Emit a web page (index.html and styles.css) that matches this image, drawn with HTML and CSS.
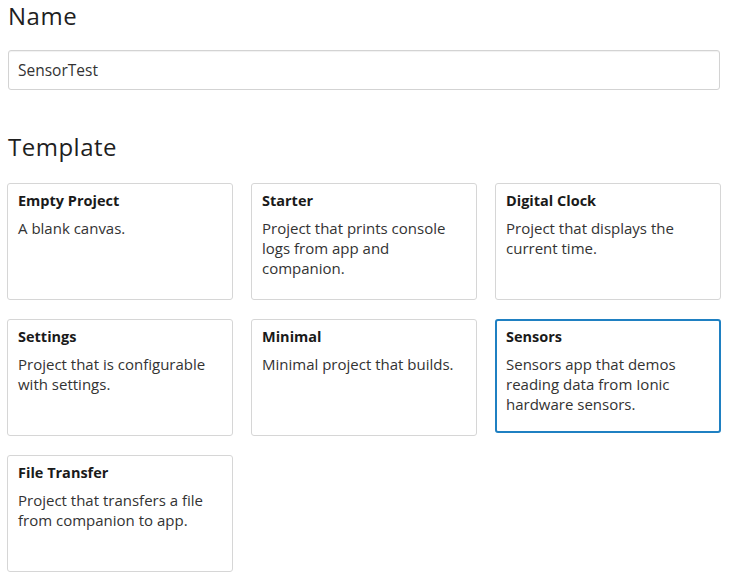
FILE: index.html
```html
<!DOCTYPE html>
<html>
<head>
<meta charset="utf-8">
<link rel="stylesheet" href="styles.css">
</head>
<body>
<div class="page">
  <h2 class="heading">Name</h2>
  <input class="name-input" type="text" value="SensorTest">
  <h2 class="heading heading-template">Template</h2>
  <div class="grid">
    <div class="card"><div class="card-title">Empty Project</div><div class="card-desc">A blank canvas.</div></div>
    <div class="card"><div class="card-title">Starter</div><div class="card-desc">Project that prints console logs from app and companion.</div></div>
    <div class="card"><div class="card-title">Digital Clock</div><div class="card-desc">Project that displays the current time.</div></div>
    <div class="card"><div class="card-title">Settings</div><div class="card-desc">Project that is configurable with settings.</div></div>
    <div class="card"><div class="card-title">Minimal</div><div class="card-desc">Minimal project that builds.</div></div>
    <div class="card selected"><div class="card-title">Sensors</div><div class="card-desc">Sensors app that demos reading data from Ionic hardware sensors.</div></div>
    <div class="card"><div class="card-title">File Transfer</div><div class="card-desc">Project that transfers a file from companion to app.</div></div>
  </div>
</div>
</body>
</html>
```
FILE: styles.css
```css
* { box-sizing: border-box; }
html, body { margin: 0; padding: 0; background: #fff; }
body { font-family: "Open Sans", "Lato", sans-serif; color: #222; }
.page { padding: 4px 12px 0 8px; }
.heading { margin: 0; font-size: 24px; font-weight: 400; line-height: 24px; color: #1f1f1f; letter-spacing: 0.5px; }
.name-input {
  display: block; width: 712px; height: 40px; margin-top: 22px;
  border: 1px solid #d3d3d3; border-radius: 3px; padding: 0 9px;
  font-family: inherit; font-size: 15.5px; color: #333; outline: none;
  box-shadow: inset 0 1px 1px rgba(0,0,0,0.06);
}
.heading-template { margin-top: 45px; }
.grid {
  display: grid; grid-template-columns: repeat(3, 226px); column-gap: 18px; row-gap: 19px;
  margin: 24px 0 0 -1px;
}
.card {
  height: 117px; border: 1px solid #d6d6d6; border-radius: 3px; padding: 7px 10px;
}
.card.selected { border: 2px solid #1f80c2; padding: 6px 9px; height: 114px; }
.card-title { font-size: 14.5px; font-weight: 700; line-height: 20px; color: #1a1a1a; }
.card-desc { margin-top: 7px; font-size: 15px; line-height: 20px; color: #333; }
```
